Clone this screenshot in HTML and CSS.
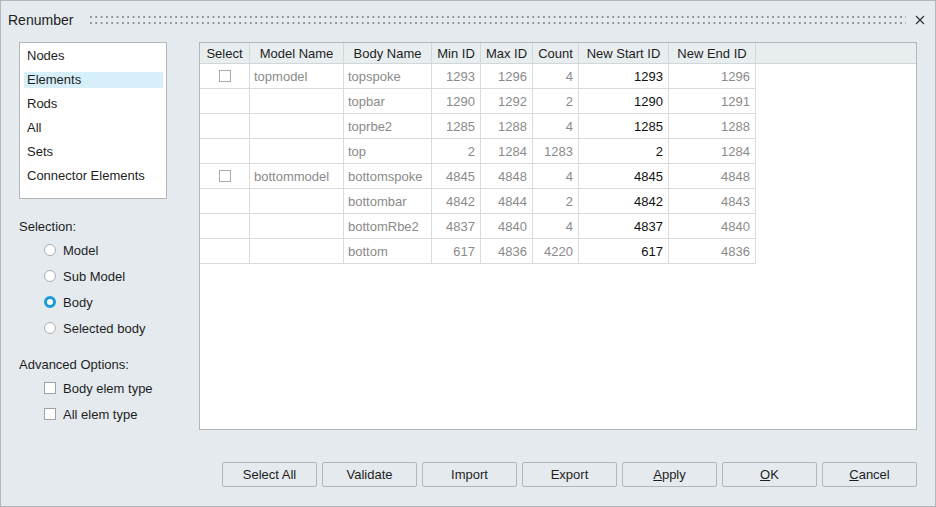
FILE: index.html
```html
<!DOCTYPE html>
<html lang="en">
<head>
    <meta charset="UTF-8">
    <title>Renumber</title>
    <link rel="stylesheet" href="styles.css">
</head>
<body>
    <div class="dialog">
        <div class="titlebar">
            <span class="title">Renumber</span>
            <svg class="grip" height="8" shape-rendering="crispEdges">
                <defs>
                    <pattern id="dots" width="5.33" height="6" patternUnits="userSpaceOnUse">
                        <rect x="0" y="0" width="2" height="2" fill="#8b9196"/>
                    </pattern>
                </defs>
                <rect width="100%" height="8" fill="url(#dots)"/>
            </svg>
            <svg class="close" width="10" height="10" viewBox="0 0 10 10">
                <path d="M1 1 L9 9 M9 1 L1 9" stroke="#333" stroke-width="1.2" fill="none"/>
            </svg>
        </div>

        <div class="content">
            <div class="side">
                <ul class="entity-list">
                    <li>Nodes</li>
                    <li class="active">Elements</li>
                    <li>Rods</li>
                    <li>All</li>
                    <li>Sets</li>
                    <li>Connector Elements</li>
                </ul>

                <div class="group-label selection-label">Selection:</div>
                <div class="option"><span class="radio"></span>Model</div>
                <div class="option"><span class="radio"></span>Sub Model</div>
                <div class="option"><span class="radio checked"></span>Body</div>
                <div class="option"><span class="radio"></span>Selected body</div>

                <div class="group-label advanced-label">Advanced Options:</div>
                <div class="option"><span class="check"></span>Body elem type</div>
                <div class="option"><span class="check"></span>All elem type</div>
            </div>

            <div class="grid">
                <table>
                    <thead>
                        <tr>
                            <th class="c-sel">Select</th>
                            <th class="c-model">Model Name</th>
                            <th class="c-body">Body Name</th>
                            <th class="c-min">Min ID</th>
                            <th class="c-max">Max ID</th>
                            <th class="c-count">Count</th>
                            <th class="c-start">New Start ID</th>
                            <th class="c-end">New End ID</th>
                        </tr>
                    </thead>
                    <tbody>
                        <tr>
                            <td class="sel"><span class="check"></span></td>
                            <td>topmodel</td><td>topspoke</td>
                            <td class="num">1293</td><td class="num">1296</td><td class="num">4</td>
                            <td class="num start">1293</td><td class="num">1296</td>
                        </tr>
                        <tr>
                            <td></td><td></td><td>topbar</td>
                            <td class="num">1290</td><td class="num">1292</td><td class="num">2</td>
                            <td class="num start">1290</td><td class="num">1291</td>
                        </tr>
                        <tr>
                            <td></td><td></td><td>toprbe2</td>
                            <td class="num">1285</td><td class="num">1288</td><td class="num">4</td>
                            <td class="num start">1285</td><td class="num">1288</td>
                        </tr>
                        <tr>
                            <td></td><td></td><td>top</td>
                            <td class="num">2</td><td class="num">1284</td><td class="num">1283</td>
                            <td class="num start">2</td><td class="num">1284</td>
                        </tr>
                        <tr>
                            <td class="sel"><span class="check"></span></td>
                            <td>bottommodel</td><td>bottomspoke</td>
                            <td class="num">4845</td><td class="num">4848</td><td class="num">4</td>
                            <td class="num start">4845</td><td class="num">4848</td>
                        </tr>
                        <tr>
                            <td></td><td></td><td>bottombar</td>
                            <td class="num">4842</td><td class="num">4844</td><td class="num">2</td>
                            <td class="num start">4842</td><td class="num">4843</td>
                        </tr>
                        <tr>
                            <td></td><td></td><td>bottomRbe2</td>
                            <td class="num">4837</td><td class="num">4840</td><td class="num">4</td>
                            <td class="num start">4837</td><td class="num">4840</td>
                        </tr>
                        <tr>
                            <td></td><td></td><td>bottom</td>
                            <td class="num">617</td><td class="num">4836</td><td class="num">4220</td>
                            <td class="num start">617</td><td class="num">4836</td>
                        </tr>
                    </tbody>
                </table>
            </div>
        </div>

        <div class="buttons">
            <button type="button">Select All</button>
            <button type="button">Validate</button>
            <button type="button">Import</button>
            <button type="button">Export</button>
            <button type="button"><u>A</u>pply</button>
            <button type="button"><u>O</u>K</button>
            <button type="button"><u>C</u>ancel</button>
        </div>
    </div>
</body>
</html>
```

FILE: styles.css
```css
body {
    margin: 0;
    font-family: "Liberation Sans", Arial, sans-serif;
    font-size: 13px;
    color: #1e1e1e;
    background: #e4eaee;
}

.dialog {
    width: 936px;
    height: 507px;
    box-sizing: border-box;
    border: 1px solid #b3b7ba;
    background: #e4eaee;
    display: flex;
    flex-direction: column;
}

.titlebar {
    height: 37px;
    display: flex;
    align-items: center;
    padding: 0 10px 0 7px;
}

.title {
    font-size: 14px;
    color: #222;
}

.grip {
    flex: 1;
    height: 8px;
    margin: 0 9px 0 17px;
    display: block;
}

.close {
    display: block;
}

.content {
    display: flex;
    padding: 4px 18px 0 18px;
    gap: 32px;
    height: 388px;
}

.side {
    width: 148px;
    flex: none;
}

.entity-list {
    list-style: none;
    margin: 0;
    padding: 5px 3px 0 4px;
    height: 157px;
    box-sizing: border-box;
    background: #fff;
    border: 1px solid #b3b7ba;
}

.entity-list li {
    height: 16px;
    line-height: 16px;
    padding-left: 3px;
    margin-bottom: 8px;
}

.entity-list li.active {
    background: #d7eff9;
}

.group-label {
    height: 16px;
    line-height: 16px;
}

.selection-label {
    margin-top: 20px;
}

.advanced-label {
    margin-top: 16px;
}

.option {
    display: flex;
    align-items: center;
    height: 26px;
    padding-left: 25px;
}

.selection-label + .option {
    margin-top: 2px;
}

.advanced-label + .option {
    margin-top: 2px;
}

.radio {
    width: 12px;
    height: 12px;
    box-sizing: border-box;
    border: 1px solid #a9adb1;
    border-radius: 50%;
    background: #fff;
    margin-right: 7px;
}

.radio.checked {
    border: 3.5px solid #1a9ad8;
}

.check {
    display: inline-block;
    width: 12px;
    height: 12px;
    box-sizing: border-box;
    border: 1px solid #9ea3a7;
    background: #fff;
    margin-right: 7px;
}

.grid {
    flex: 1;
    border: 1px solid #b3b7ba;
    background: linear-gradient(#e8edf0 0, #e8edf0 20px, #d2d6d9 20px, #d2d6d9 21px, #fff 21px);
}

table {
    border-collapse: separate;
    border-spacing: 0;
    table-layout: fixed;
}

th {
    height: 20px;
    padding: 0;
    font-weight: normal;
    text-align: center;
    color: #1e1e1e;
    border-right: 1px solid #d2d6d9;
    border-bottom: 1px solid #d2d6d9;
    white-space: nowrap;
}

td {
    height: 24px;
    padding: 0 4px;
    color: #8a8a8a;
    border-right: 1px solid #dadada;
    border-bottom: 1px solid #dadada;
    white-space: nowrap;
}

td.num {
    text-align: right;
    padding-right: 5px;
}

td.start {
    color: #111;
}

td.sel {
    text-align: center;
    padding: 0;
}

td.sel .check {
    margin: 3px 0 0 0;
    border-color: #a9adb1;
}

.c-sel { width: 49px; }
.c-model { width: 93px; }
.c-body { width: 87px; }
.c-min { width: 48px; }
.c-max { width: 51px; }
.c-count { width: 45px; }
.c-start { width: 89px; }
.c-end { width: 86px; }

.buttons {
    display: flex;
    justify-content: flex-end;
    gap: 5px;
    padding: 32px 18px 0 0;
}

.buttons button {
    width: 95px;
    height: 25px;
    font-family: inherit;
    font-size: 13px;
    color: #1e1e1e;
    background: #e4eaee;
    border: 1px solid #b3b7ba;
    border-radius: 2px;
    padding: 0;
}
```
